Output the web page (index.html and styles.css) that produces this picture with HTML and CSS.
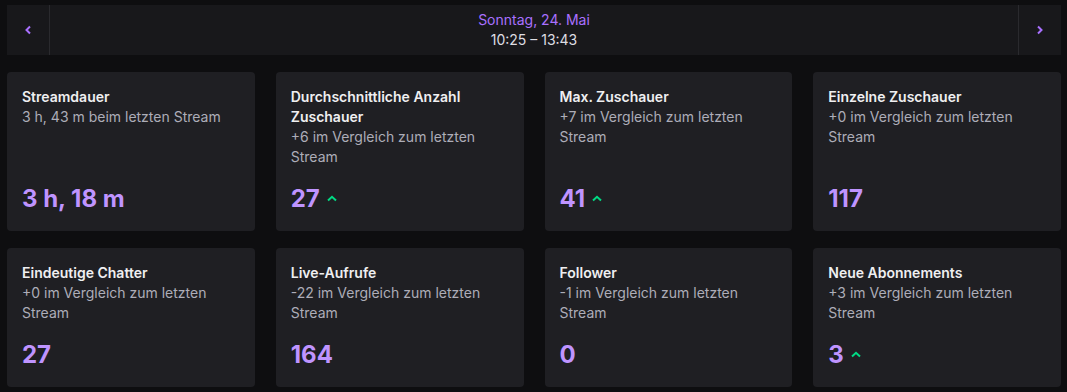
FILE: index.html
```html
<!DOCTYPE html>
<html lang="de">
<head>
<meta charset="utf-8">
<link rel="stylesheet" href="styles.css">
</head>
<body>
<div class="page">
  <header class="nav">
    <button class="nav-btn nav-prev" aria-label="Zurück">
      <svg width="8" height="10" viewBox="0 0 8 10"><path d="M6 1.5 L2.5 5 L6 8.5" fill="none" stroke="#a970ff" stroke-width="2"/></svg>
    </button>
    <div class="nav-center">
      <div class="nav-date">Sonntag, 24. Mai</div>
      <div class="nav-time">10:25 – 13:43</div>
    </div>
    <button class="nav-btn nav-next" aria-label="Weiter">
      <svg width="8" height="10" viewBox="0 0 8 10"><path d="M2 1.5 L5.5 5 L2 8.5" fill="none" stroke="#a970ff" stroke-width="2"/></svg>
    </button>
  </header>

  <section class="grid">
    <div class="card">
      <div class="title">Streamdauer</div>
      <div class="sub">3 h, 43 m beim letzten Stream</div>
      <div class="value">3 h, 18 m</div>
    </div>
    <div class="card">
      <div class="title">Durchschnittliche Anzahl Zuschauer</div>
      <div class="sub">+6 im Vergleich zum letzten Stream</div>
      <div class="value">27 <svg class="up" width="10" height="7" viewBox="0 0 10 7"><path d="M1 5.5 L5 1.8 L9 5.5" fill="none" stroke="#00db84" stroke-width="2"/></svg></div>
    </div>
    <div class="card">
      <div class="title">Max. Zuschauer</div>
      <div class="sub">+7 im Vergleich zum letzten Stream</div>
      <div class="value">41 <svg class="up" width="10" height="7" viewBox="0 0 10 7"><path d="M1 5.5 L5 1.8 L9 5.5" fill="none" stroke="#00db84" stroke-width="2"/></svg></div>
    </div>
    <div class="card">
      <div class="title">Einzelne Zuschauer</div>
      <div class="sub">+0 im Vergleich zum letzten Stream</div>
      <div class="value">117</div>
    </div>
    <div class="card">
      <div class="title">Eindeutige Chatter</div>
      <div class="sub">+0 im Vergleich zum letzten Stream</div>
      <div class="value">27</div>
    </div>
    <div class="card">
      <div class="title">Live-Aufrufe</div>
      <div class="sub">-22 im Vergleich zum letzten Stream</div>
      <div class="value">164</div>
    </div>
    <div class="card">
      <div class="title">Follower</div>
      <div class="sub">-1 im Vergleich zum letzten Stream</div>
      <div class="value">0</div>
    </div>
    <div class="card">
      <div class="title">Neue Abonnements</div>
      <div class="sub">+3 im Vergleich zum letzten Stream</div>
      <div class="value">3 <svg class="up" width="10" height="7" viewBox="0 0 10 7"><path d="M1 5.5 L5 1.8 L9 5.5" fill="none" stroke="#00db84" stroke-width="2"/></svg></div>
    </div>
  </section>
</div>
</body>
</html>
```

FILE: styles.css
```css
html, body {
  margin: 0;
  padding: 0;
  background: #0e0e10;
}
body {
  font-family: Inter, "Noto Sans", "Liberation Sans", sans-serif;
  color: #efeff1;
  width: 1067px;
  height: 392px;
  overflow: hidden;
}
.page {
  padding: 5px 6px 0 7px;
}
.nav {
  display: flex;
  height: 50px;
  background: #18181b;
}
.nav-btn {
  width: 43px;
  border: none;
  background: transparent;
  padding: 0;
  display: flex;
  align-items: center;
  justify-content: center;
}
.nav-prev {
  border-right: 1px solid #2a2a2e;
}
.nav-next {
  border-left: 1px solid #2a2a2e;
}
.nav-center {
  flex: 1;
  display: flex;
  flex-direction: column;
  align-items: center;
  justify-content: center;
  line-height: 20px;
  font-size: 14px;
}
.nav-date {
  color: #a970ff;
}
.nav-time {
  color: #dedee3;
}
.grid {
  margin-top: 17px;
  display: grid;
  grid-template-columns: repeat(4, 1fr);
  column-gap: 21px;
  row-gap: 17px;
}
.card {
  background: #1f1f23;
  border-radius: 4px;
  padding: 15px 15px 16px 15px;
  display: flex;
  flex-direction: column;
  font-size: 14px;
  line-height: 20px;
}
.title {
  font-weight: 600;
  color: #efeff1;
}
.sub {
  color: #adadb8;
}
.value {
  margin-top: auto;
  padding-top: 16px;
  font-size: 24px;
  font-weight: 700;
  line-height: 32px;
  color: #bf94ff;
  display: flex;
  align-items: center;
  gap: 7px;
}
.up {
  margin-top: -2px;
}
```
